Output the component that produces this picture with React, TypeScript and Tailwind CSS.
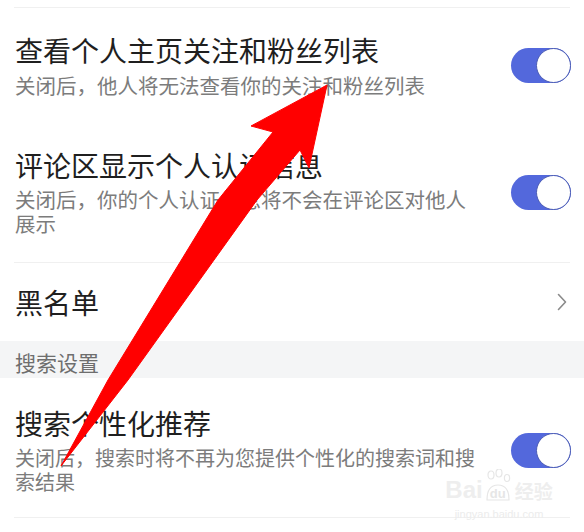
import React from "react";

function Toggle() {
  return (
    <div className="relative h-[35px] w-[60px] shrink-0 rounded-full bg-[#5368dc]">
      <div className="absolute right-0 top-0 h-[35px] w-[35px] rounded-full border-[1.5px] border-[#4b5cb5] bg-white" />
    </div>
  );
}

function Divider() {
  return <div className="mx-[14px] h-px bg-[#f0f0f0]" />;
}

export default function App() {
  return (
    <div className="relative h-[532px] w-[584px] overflow-hidden bg-white font-['Noto_Sans_CJK_SC',sans-serif]">
      <div className="h-[7px]" />
      <Divider />

      {/* Row 1 */}
      <div className="flex items-center justify-between pl-[15px] pr-[13px] pt-[26px] pb-[26px]">
        <div className="flex flex-col">
          <div className="whitespace-nowrap text-[28px] leading-[32px] text-[#1f1f1f]">查看个人主页关注和粉丝列表</div>
          <div className="mt-[7px] whitespace-nowrap text-[20.5px] leading-[24px] text-[#7c7c7c]">关闭后，他人将无法查看你的关注和粉丝列表</div>
        </div>
        <Toggle />
      </div>

      {/* Row 2 */}
      <div className="flex items-center justify-between pl-[15px] pr-[13px] pt-[26px] pb-[27px]">
        <div className="flex flex-col">
          <div className="whitespace-nowrap text-[28px] leading-[32px] text-[#1f1f1f]">评论区显示个人认证信息</div>
          <div className="mt-[6px] flex flex-col whitespace-nowrap text-[20.5px] leading-[24px] text-[#7c7c7c]">
            <span>关闭后，你的个人认证信息将不会在评论区对他人</span>
            <span>展示</span>
          </div>
        </div>
        <Toggle />
      </div>

      <Divider />

      {/* Row 3 */}
      <div className="flex items-center justify-between pl-[15px] pr-[17px] pt-[23px] pb-[23px]">
        <div className="text-[28px] leading-[32px] text-[#1f1f1f]">黑名单</div>
        <svg width="10" height="18" viewBox="0 0 10 18" fill="none">
          <path d="M1.5 1.5 L8.5 9 L1.5 16.5" stroke="#8a8a8a" strokeWidth="1.6" strokeLinecap="round" strokeLinejoin="round" />
        </svg>
      </div>

      {/* Section header */}
      <div className="h-[37px] bg-[#f4f5f6] pl-[15px] pt-[7px]">
        <div className="text-[21px] leading-[28px] text-[#6e6e6e]">搜索设置</div>
      </div>

      {/* Row 4 */}
      <div className="flex items-center justify-between pl-[15px] pr-[13px] pt-[29px] pb-[23px]">
        <div className="flex flex-col">
          <div className="whitespace-nowrap text-[28px] leading-[32px] text-[#1f1f1f]">搜索个性化推荐</div>
          <div className="mt-[7px] flex flex-col whitespace-nowrap text-[20px] leading-[24px] text-[#7c7c7c]">
            <span>关闭后，搜索时将不再为您提供个性化的搜索词和搜</span>
            <span>索结果</span>
          </div>
        </div>
        <Toggle />
      </div>

      <Divider />

      {/* Watermark */}
      <div className="pointer-events-none absolute left-[444px] top-[478px] flex w-[110px] flex-col items-center">
        <div className="flex items-end whitespace-nowrap">
          <span className="font-['Liberation_Sans',sans-serif] text-[24px] font-bold leading-[24px] text-[#eeeeee]">Bai</span>
          <span className="relative mx-[2px] flex h-[22px] w-[26px] items-end justify-center">
            <svg className="absolute left-0 top-[-11px]" width="26" height="33" viewBox="0 0 26 33">
              <ellipse cx="6" cy="6" rx="3" ry="4" fill="none" stroke="#e6e6e6" strokeWidth="1.2" />
              <ellipse cx="14" cy="4" rx="3" ry="4" fill="none" stroke="#e6e6e6" strokeWidth="1.2" />
              <ellipse cx="22" cy="9" rx="2.6" ry="3.5" fill="none" stroke="#e6e6e6" strokeWidth="1.2" />
              <path d="M2 31 Q2 16 13 16 Q24 16 24 31 Z" fill="none" stroke="#e6e6e6" strokeWidth="1.2" />
            </svg>
            <span className="relative font-['Liberation_Sans',sans-serif] text-[13px] font-bold leading-[16px] text-[#e6e6e6]">du</span>
          </span>
          <span className="ml-[2px] text-[19px] font-bold leading-[22px] text-[#eeeeee]">经验</span>
        </div>
        <div className="mt-[6px] whitespace-nowrap font-['Liberation_Sans',sans-serif] text-[11px] leading-[12px] text-[#ececec]">jingyan.baidu.com</div>
      </div>

      {/* Red arrow annotation */}
      <svg className="pointer-events-none absolute left-0 top-0" width="584" height="532" viewBox="0 0 584 532">
        <polygon
          points="61,466 108,380 218,200 273,132 251,126 327,85 309,168 300,150 257,200 128,380"
          fill="#ff0000"
          stroke="#ff0000"
          strokeWidth="1"
          strokeLinejoin="round"
        />
      </svg>
    </div>
  );
}
